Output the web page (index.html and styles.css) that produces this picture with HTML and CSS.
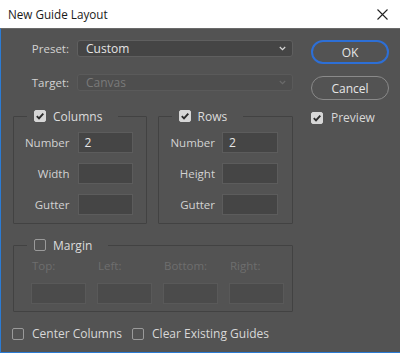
FILE: index.html
```html
<!DOCTYPE html>
<html>
<head>
<meta charset="utf-8">
<link rel="stylesheet" href="styles.css">
</head>
<body>
<div class="window">
  <div class="titlebar">
    <span class="title">New Guide Layout</span>
    <svg class="close" width="11" height="11" viewBox="0 0 11 11"><path d="M0.5 0.5 L10.5 10.5 M10.5 0.5 L0.5 10.5" stroke="#222" stroke-width="1.1" fill="none"/></svg>
  </div>
  <div class="content">
    <div class="left">
      <div class="form-row">
        <span class="label">Preset:</span>
        <div class="select">
          <span>Custom</span>
          <svg width="7" height="5" viewBox="0 0 7 5"><path d="M0.8 1 L3.5 3.7 L6.2 1" stroke="#d8d8d8" stroke-width="1.2" fill="none"/></svg>
        </div>
      </div>
      <div class="form-row">
        <span class="label">Target:</span>
        <div class="select disabled">
          <span>Canvas</span>
          <svg width="7" height="5" viewBox="0 0 7 5"><path d="M0.8 1 L3.5 3.7 L6.2 1" stroke="#6a6a6a" stroke-width="1.2" fill="none"/></svg>
        </div>
      </div>
      <div class="groups">
        <fieldset class="group cols">
          <legend><span class="cb checked"><svg width="12" height="12" viewBox="0 0 12 12"><path d="M2.8 6.2 L5 8.4 L9.3 3.6" stroke="#2b2b2b" stroke-width="1.9" fill="none"/></svg></span><span>Columns</span></legend>
          <div class="fields">
            <span class="label">Number</span><div class="input">2</div>
            <span class="label">Width</span><div class="input"></div>
            <span class="label">Gutter</span><div class="input"></div>
          </div>
        </fieldset>
        <fieldset class="group rows">
          <legend><span class="cb checked"><svg width="12" height="12" viewBox="0 0 12 12"><path d="M2.8 6.2 L5 8.4 L9.3 3.6" stroke="#2b2b2b" stroke-width="1.9" fill="none"/></svg></span><span>Rows</span></legend>
          <div class="fields">
            <span class="label">Number</span><div class="input">2</div>
            <span class="label">Height</span><div class="input"></div>
            <span class="label">Gutter</span><div class="input"></div>
          </div>
        </fieldset>
      </div>
      <fieldset class="group margin">
        <legend><span class="cb"></span><span>Margin</span></legend>
        <div class="margin-grid">
          <span class="dlabel">Top:</span>
          <span class="dlabel">Left:</span>
          <span class="dlabel">Bottom:</span>
          <span class="dlabel">Right:</span>
          <div class="input disabled"></div>
          <div class="input disabled"></div>
          <div class="input disabled"></div>
          <div class="input disabled"></div>
        </div>
      </fieldset>
      <div class="bottom">
        <label class="check"><span class="cb"></span><span>Center Columns</span></label>
        <label class="check"><span class="cb"></span><span>Clear Existing Guides</span></label>
      </div>
    </div>
    <div class="right">
      <button class="btn primary">OK</button>
      <button class="btn">Cancel</button>
      <label class="check preview"><span class="cb checked"><svg width="12" height="12" viewBox="0 0 12 12"><path d="M2.8 6.2 L5 8.4 L9.3 3.6" stroke="#2b2b2b" stroke-width="1.9" fill="none"/></svg></span><span>Preview</span></label>
    </div>
  </div>
</div>
</body>
</html>
```
FILE: styles.css
```css
* { box-sizing: border-box; }
html, body { margin: 0; padding: 0; }
body {
  width: 400px;
  height: 353px;
  overflow: hidden;
  font-family: "Open Sans", "Noto Sans", sans-serif;
  font-size: 11.5px;
  color: #d4d4d4;
  background: #535353;
}
.window {
  width: 400px;
  height: 353px;
  display: flex;
  flex-direction: column;
}
.titlebar {
  height: 28px;
  flex: none;
  background: #ffffff;
  display: flex;
  align-items: center;
  justify-content: space-between;
  padding: 0 12px 0 8px;
  color: #1a1a1a;
  font-size: 11.7px;
}
.title { line-height: 14px; }
.close { display: block; }
.content {
  flex: 1;
  background: #535353;
  border-left: 1px solid #2b7bd3;
  border-bottom: 1px solid #2b7bd3;
  border-top: 1px solid #6a6a6a;
  display: flex;
  padding: 11px 0 0 12px;
  gap: 18px;
}
.left { width: 280px; display: flex; flex-direction: column; }
.right { width: 78px; display: flex; flex-direction: column; }

.form-row {
  display: grid;
  grid-template-columns: 56px 216px;
  column-gap: 8px;
  align-items: center;
  height: 17px;
  margin-bottom: 17px;
}
.label { text-align: right; color: #d2d2d2; white-space: nowrap; }
.select {
  height: 17px;
  background: #454545;
  border: 1px solid #5f5f5f;
  border-radius: 3px;
  display: flex;
  align-items: center;
  justify-content: space-between;
  padding: 0 6px 0 8px;
  color: #e4e4e4;
  font-size: 12px;
}
.select svg { display: block; }
.select.disabled { background: #4e4e4e; border-color: #5a5a5a; color: #7a7a7a; }

.groups { display: flex; gap: 11px; margin-top: 1px; }
.group {
  margin: 0;
  padding: 0;
  min-width: 0;
  border: 1px solid #424242;
  border-radius: 1px;
}
.group legend {
  margin-left: 13px;
  padding: 0 16px 0 7px;
  display: flex;
  align-items: center;
  gap: 7px;
  height: 14px;
  color: #dcdcdc;
  font-size: 12px;
}
.cols { width: 134px; }
.rows { width: 136px; }
.fields {
  display: grid;
  grid-template-columns: 1fr 55px;
  column-gap: 8px;
  row-gap: 10px;
  align-items: center;
  padding: 9px 13px 8px 0;
}
.rows .fields { grid-template-columns: 1fr 56px; column-gap: 7px; padding-right: 14px; }
.input {
  height: 21px;
  background: #454545;
  border: 1px solid #5c5c5c;
  color: #e6e6e6;
  font-size: 12px;
  line-height: 19px;
  padding-left: 6px;
}
.input.disabled { background: #4b4b4b; border-color: #595959; }

.margin { width: 280px; margin-top: 14px; }
.margin-grid {
  display: grid;
  grid-template-columns: repeat(4, 55px);
  column-gap: 11px;
  row-gap: 10px;
  padding: 7px 8px 7px 17px;
}
.dlabel { color: #6e6e6e; font-size: 11.5px; padding-left: 1px; line-height: 14px; }

.bottom { display: flex; gap: 10px; margin-top: 13px; margin-left: -1px; }
.check { display: flex; align-items: center; gap: 8px; color: #d8d8d8; font-size: 12px; }
.cb {
  width: 12px;
  height: 12px;
  flex: none;
  border: 1px solid #9a9a9a;
  border-radius: 2px;
  display: block;
}
.cb.checked { background: #d6d6d6; border-color: #d6d6d6; }
.cb svg { display: block; margin: -1px; }

.btn {
  width: 78px;
  height: 24px;
  border-radius: 12px;
  background: #535353;
  border: 1px solid #8a8a8a;
  color: #e6e6e6;
  font-family: "Open Sans", "Noto Sans", sans-serif;
  font-size: 12px;
  padding: 0;
  margin-bottom: 12px;
}
.btn.primary { border: 2px solid #2d6fd6; }
.preview { margin-top: -3px; }
```
